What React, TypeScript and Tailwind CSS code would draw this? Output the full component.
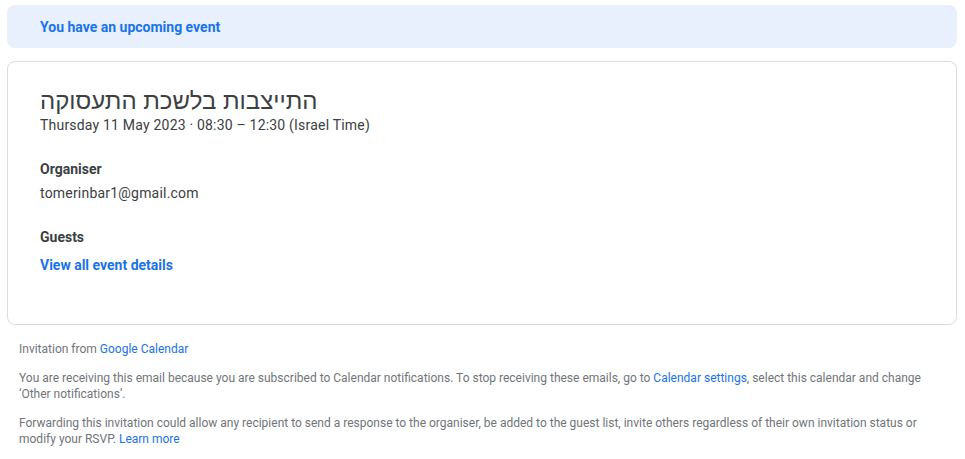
export default function App() {
  return (
    <div
      className="min-h-screen bg-white pt-[5px] pl-[7px] pr-[8px] text-[#3c4043]"
      style={{ fontFamily: 'Roboto, "Open Sans", "Noto Sans", Arial, sans-serif' }}
    >
      <div className="flex h-[43px] items-center rounded-lg bg-[#e8f0fe] pl-[33px]">
        <span className="text-sm font-bold text-[#1a73e8]">You have an upcoming event</span>
      </div>

      <div className="mt-[13px] rounded-lg border border-[#dadce0] pl-[32px] pt-[25px] pb-[49px]">
        <h1 className="text-left font-['Liberation_Sans',Arial,sans-serif] text-[24px] leading-[28px] font-normal text-[#3c4043]">
          <span dir="rtl">התייצבות בלשכת התעסוקה</span>
        </h1>
        <p className="text-sm leading-5 tracking-[0.2px]">Thursday 11 May 2023 · 08:30 – 12:30 (Israel Time)</p>

        <div className="mt-6">
          <p className="text-sm leading-5 font-bold">Organiser</p>
          <p className="mt-1 text-sm leading-5 tracking-[0.2px]">tomerinbar1@gmail.com</p>
        </div>

        <div className="mt-6">
          <p className="text-sm leading-5 font-bold">Guests</p>
          <a className="mt-2 block text-sm leading-5 font-bold text-[#1a73e8]" href="#">
            View all event details
          </a>
        </div>
      </div>

      <div className="mt-[16px] px-3 text-xs leading-4 text-[#70757a]">
        <p>
          Invitation from <a className="text-[#1a73e8]" href="#">Google Calendar</a>
        </p>
        <p className="mt-[13px]">
          You are receiving this email because you are subscribed to Calendar notifications. To stop receiving these
          emails, go to <a className="text-[#1a73e8]" href="#">Calendar settings</a>, select this calendar and change
          ‘Other notifications’.
        </p>
        <p className="mt-[13px]">
          Forwarding this invitation could allow any recipient to send a response to the organiser, be added to the
          guest list, invite others regardless of their own invitation status or modify your RSVP.{' '}
          <a className="text-[#1a73e8]" href="#">Learn more</a>
        </p>
      </div>
    </div>
  )
}
